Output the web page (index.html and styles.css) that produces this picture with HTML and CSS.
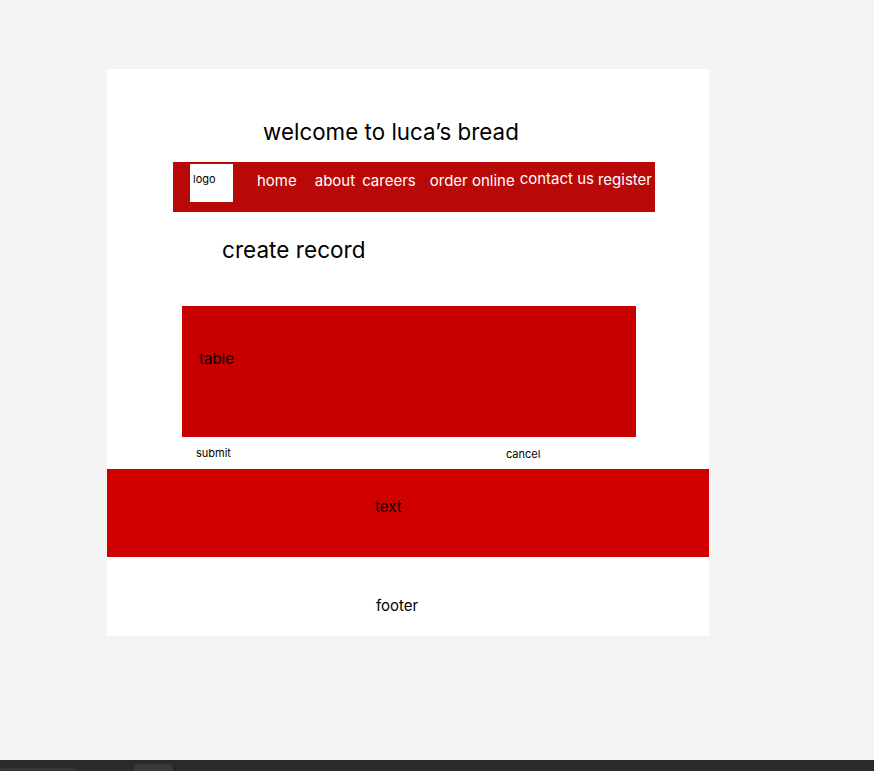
FILE: index.html
```html
<!DOCTYPE html>
<html>
<head>
<meta charset="utf-8">
<title>luca's bread</title>
<link rel="stylesheet" href="styles.css">
</head>
<body>
<div class="canvas">
  <div class="frame">
    <h1 class="title">welcome to luca’s bread</h1>
    <nav class="nav">
      <div class="logo">logo</div>
      <a class="nav-item home">home</a>
      <a class="nav-item about">about</a>
      <a class="nav-item careers">careers</a>
      <a class="nav-item order">order online</a>
      <a class="nav-item contact">contact us</a>
      <a class="nav-item register">register</a>
    </nav>
    <h2 class="heading">create record</h2>
    <div class="table">table</div>
    <div class="actions">
      <span class="submit">submit</span>
      <span class="cancel">cancel</span>
    </div>
    <div class="band">text</div>
    <footer class="footer">footer</footer>
  </div>
</div>
<div class="toolbar">
  <div class="tb-left"></div>
  <div class="tb-btn"></div>
</div>
</body>
</html>
```

FILE: styles.css
```css
* { box-sizing: border-box; }
html, body { margin: 0; padding: 0; }
body {
  width: 874px;
  height: 771px;
  background: #f4f4f4;
  font-family: Inter, "Noto Sans", sans-serif;
  color: #000;
  display: flex;
  flex-direction: column;
  overflow: hidden;
}
.canvas {
  flex: 1;
  padding: 69px 0 0 107px;
}
.frame {
  width: 602px;
  height: 567px;
  background: #fff;
  display: flex;
  flex-direction: column;
}
.title {
  margin: 49px 0 0 156px;
  font-size: 22.3px;
  letter-spacing: 0.05px;
  line-height: 27px;
  font-weight: 400;
}
.nav {
  margin: 17px 0 0 66px;
  width: 482px;
  height: 50px;
  background: #b90808;
  display: flex;
  align-items: flex-start;
  color: #fff;
}
.logo {
  margin: 2px 0 0 17px;
  width: 43px;
  height: 38px;
  background: #fff;
  color: #000;
  font-size: 11px;
  line-height: 13px;
  padding: 9px 0 0 3px;
}
.nav-item {
  font-size: 15px;
  line-height: 18px;
  margin-top: 10px;
  white-space: nowrap;
}
.home { margin-left: 24px; }
.about { margin-left: 18px; }
.careers { margin-left: 7px; }
.order { margin-left: 14px; }
.contact { margin-left: 5px; margin-top: 8px; }
.register { margin-left: 4px; margin-top: 9px; }
.heading {
  margin: 24px 0 0 115px;
  font-size: 22.5px;
  letter-spacing: 0.05px;
  line-height: 27px;
  font-weight: 400;
}
.table {
  margin: 43px 0 0 75px;
  width: 454px;
  height: 131px;
  background: #c90000;
  font-size: 15px;
  line-height: 18px;
  padding: 44px 0 0 17px;
}
.actions {
  height: 32px;
  display: flex;
  align-items: flex-start;
  font-size: 11px;
  line-height: 13px;
}
.submit { margin: 10px 0 0 89px; }
.cancel { margin: 11px 0 0 275px; }
.band {
  height: 88px;
  background: #d00000;
  font-size: 15px;
  line-height: 18px;
  padding: 29px 0 0 268px;
}
.footer {
  flex: 1;
  font-size: 15px;
  line-height: 18px;
  padding: 40px 0 0 269px;
}
.toolbar {
  height: 11px;
  background: #2a2a2a;
  display: flex;
  align-items: flex-end;
}
.tb-left {
  width: 77px;
  height: 3px;
  background: #363636;
  border-radius: 4px 6px 0 0;
}
.tb-btn {
  margin-left: 57px;
  width: 39px;
  height: 7px;
  background: #3a3a3a;
  border-radius: 4px 4px 0 0;
}
```
